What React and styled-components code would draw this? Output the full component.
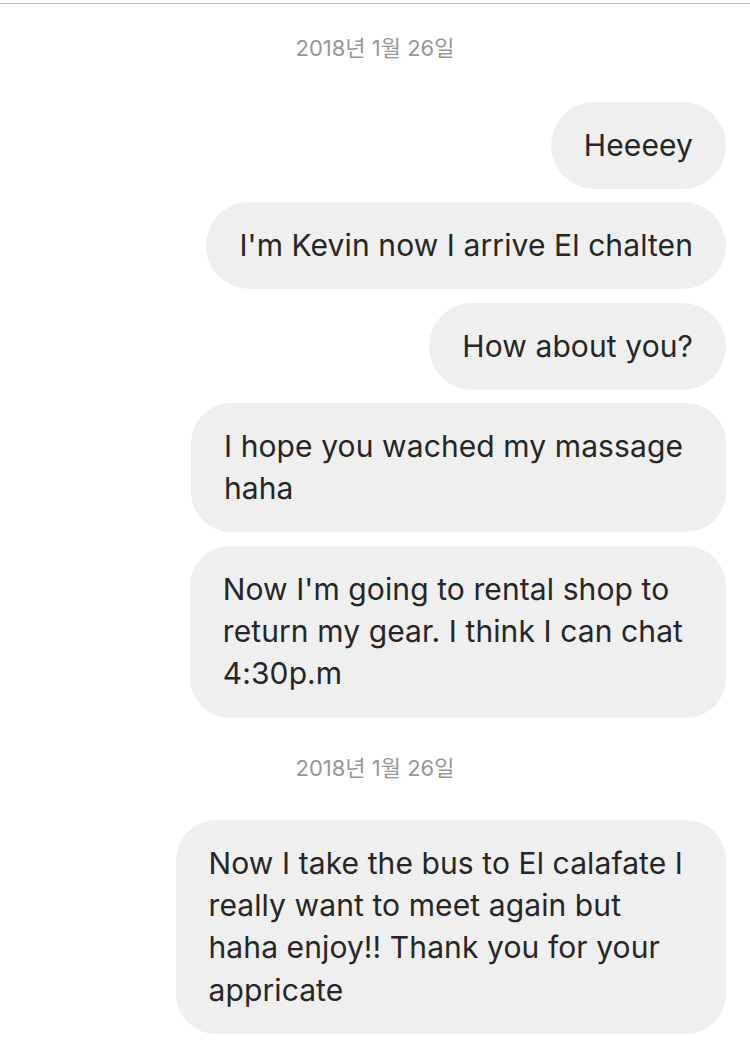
import React from 'react'
import styled, { createGlobalStyle } from 'styled-components'

const Global = createGlobalStyle`
    html, body {
        margin: 0;
        padding: 0;
        background: #fff;
    }
    body {
        font-family: Inter, "Noto Sans CJK KR", sans-serif;
    }
`

const Screen = styled.div`
    width: 750px;
    min-height: 1058px;
    margin-top: 3px;
    border-top: 1px solid #b8b8b8;
    background: #fff;
    display: flex;
    flex-direction: column;
    padding: 0 24px 0 0;
    box-sizing: border-box;
`

const DateLabel = styled.div`
    align-self: center;
    margin: ${p => p.$first ? '31px 0 41px 24px' : '37px 0 39px 24px'};
    font-family: Inter, "Noto Sans CJK KR", sans-serif;
    font-size: 22px;
    line-height: 26px;
    color: #979797;
`

const Group = styled.div`
    display: flex;
    flex-direction: column;
    align-items: flex-end;
    gap: 13.3px;
`

const Bubble = styled.div`
    padding: 22px ${p => p.$multi ? '43px' : '33px'} 23px 33px;
    background: #efefef;
    border-radius: ${p => p.$multi ? '40px' : '44px'};
    color: #262626;
    font-family: Inter, sans-serif;
    font-size: 30px;
    line-height: ${p => p.$multi ? '42.3px' : '42px'};
    letter-spacing: 0.1px;
`

const Line = styled.span`
    display: block;
    white-space: nowrap;
`

const threads = [
    {
        date: '2018년 1월 26일',
        messages: [
            ['Heeeey'],
            ["I'm Kevin now I arrive El chalten"],
            ['How about you?'],
            ['I hope you wached my massage', 'haha'],
            ["Now I'm going to rental shop to", 'return my gear. I think I can chat', '4:30p.m'],
        ],
    },
    {
        date: '2018년 1월 26일',
        messages: [
            [
                'Now I take the bus to El calafate I',
                'really want to meet again but',
                'haha enjoy!! Thank you for your',
                'appricate',
            ],
        ],
    },
]

export default function App() {
    return (
        <>
            <Global />
            <Screen>
                {threads.map((t, i) => (
                    <React.Fragment key={i}>
                        <DateLabel $first={i === 0}>{t.date}</DateLabel>
                        <Group>
                            {t.messages.map((lines, j) => (
                                <Bubble key={j} $multi={lines.length > 1}>
                                    {lines.map((l, k) => <Line key={k}>{l}</Line>)}
                                </Bubble>
                            ))}
                        </Group>
                    </React.Fragment>
                ))}
            </Screen>
        </>
    )
}
